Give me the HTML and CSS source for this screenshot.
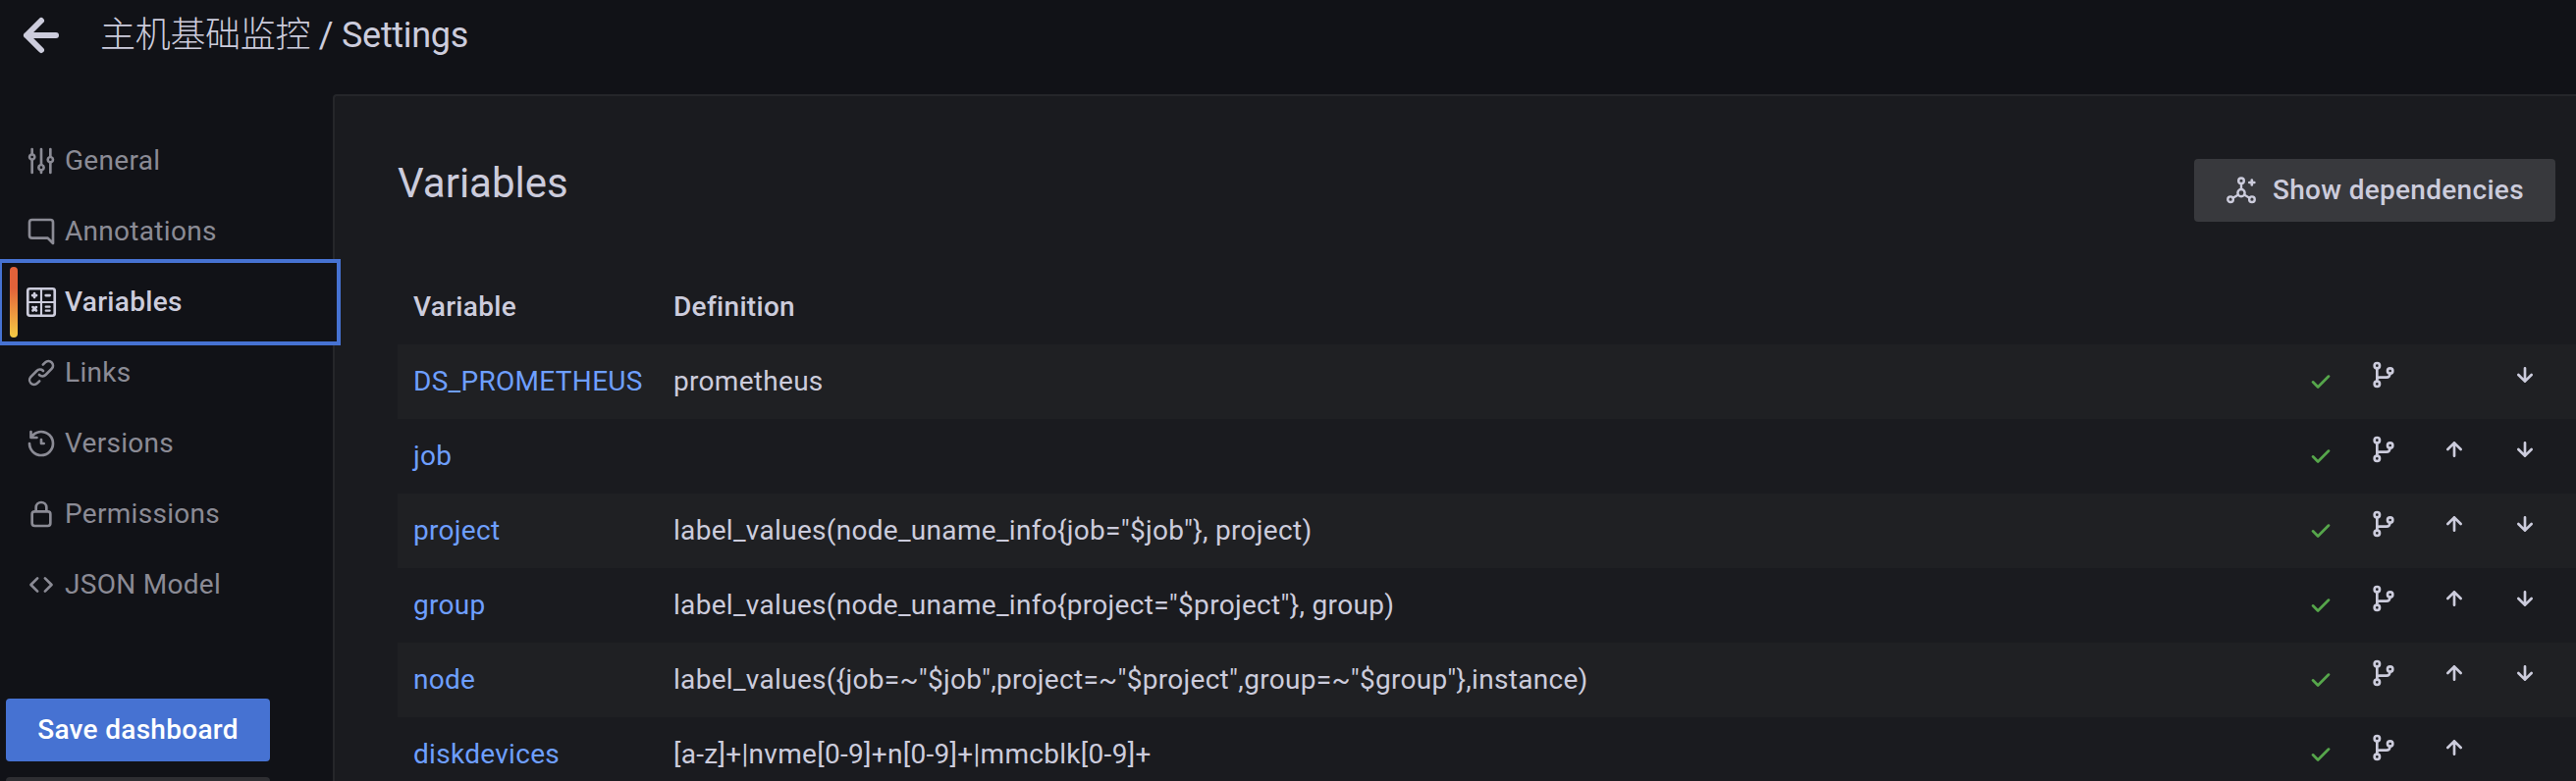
FILE: index.html
```html
<!DOCTYPE html>
<html lang="zh-CN">
<head>
	<meta charset="UTF-8">
	<title>主机基础监控 / Settings</title>
	<link rel="stylesheet" href="styles.css">
</head>
<body>
	<!-- icons -->
	<svg class="sprite">
		<symbol id="back" viewBox="0 0 24 24"><path class="line" d="M17 12H7M12 7l-5 5 5 5"/></symbol>
		<symbol id="sliders" viewBox="0 0 24 24"><path d="M20,8.18V3a1,1,0,0,0-2,0V8.18a3,3,0,0,0,0,5.64V21a1,1,0,0,0,2,0V13.82a3,3,0,0,0,0-5.64ZM19,12a1,1,0,1,1,1-1A1,1,0,0,1,19,12Zm-6,2.18V3a1,1,0,0,0-2,0V14.18a3,3,0,0,0,0,5.64V21a1,1,0,0,0,2,0V19.82a3,3,0,0,0,0-5.64ZM12,18a1,1,0,1,1,1-1A1,1,0,0,1,12,18ZM6,6.18V3A1,1,0,0,0,4,3V6.18a3,3,0,0,0,0,5.64V21a1,1,0,0,0,2,0V11.82A3,3,0,0,0,6,6.18ZM5,10A1,1,0,1,1,6,9,1,1,0,0,1,5,10Z"/></symbol>
		<symbol id="comment" viewBox="0 0 24 24"><path d="M19,2H5A3,3,0,0,0,2,5V15a3,3,0,0,0,3,3H16.59l3.7,3.71A1,1,0,0,0,21,22a.84.84,0,0,0,.38-.08A1,1,0,0,0,22,21V5A3,3,0,0,0,19,2Zm1,16.59-2.29-2.3A1,1,0,0,0,17,16H5a1,1,0,0,1-1-1V5A1,1,0,0,1,5,4H19a1,1,0,0,1,1,1Z"/></symbol>
		<symbol id="calculator" viewBox="0 0 24 24"><rect class="line" x="1.7" y="1.7" width="20.6" height="20.6" rx="1.6"/><path class="line thin" d="M12 2v20M2 12h20"/><path class="line" d="M5.3 6.8h3M6.8 5.3v3M15.5 6.8h3M5.6 15.8l2.6 2.6M8.2 15.8l-2.6 2.6"/><path class="line thin" d="M15.5 15.5h3M15.5 18.5h3"/></symbol>
		<symbol id="link" viewBox="0 0 24 24"><path d="M10,17.55,8.23,19.27a2.47,2.47,0,0,1-3.5-3.5l4.54-4.55a2.46,2.46,0,0,1,3.39-.09l.12.1a1,1,0,0,0,1.4-1.43A2.75,2.75,0,0,0,14,9.59a4.46,4.46,0,0,0-6.09.22L3.31,14.36a4.48,4.48,0,0,0,6.33,6.33L11.37,19A1,1,0,0,0,10,17.55ZM20.69,3.31a4.49,4.49,0,0,0-6.33,0L12.63,5A1,1,0,0,0,14,6.45l1.73-1.72a2.47,2.47,0,0,1,3.5,3.5l-4.54,4.55a2.46,2.46,0,0,1-3.39.09l-.12-.1a1,1,0,0,0-1.4,1.43,2.75,2.75,0,0,0,.23.21,4.47,4.47,0,0,0,6.09-.22l4.55-4.55A4.49,4.49,0,0,0,20.69,3.31Z"/></symbol>
		<symbol id="history" viewBox="0 0 24 24"><path d="M12,2A10,10,0,0,0,5.12,4.77V3a1,1,0,0,0-2,0V7.5a1,1,0,0,0,1,1H8.62a1,1,0,0,0,0-2H6.22A8,8,0,1,1,4,12a1,1,0,0,0-2,0A10,10,0,1,0,12,2Zm0,6a1,1,0,0,0-1,1v3a1,1,0,0,0,1,1h2a1,1,0,0,0,0-2H13V9A1,1,0,0,0,12,8Z"/></symbol>
		<symbol id="lock" viewBox="0 0 24 24"><path d="M17,9V7A5,5,0,0,0,7,7V9a3,3,0,0,0-3,3v7a3,3,0,0,0,3,3H17a3,3,0,0,0,3-3V12A3,3,0,0,0,17,9ZM9,7a3,3,0,0,1,6,0V9H9Zm9,12a1,1,0,0,1-1,1H7a1,1,0,0,1-1-1V12a1,1,0,0,1,1-1H17a1,1,0,0,1,1,1Z"/></symbol>
		<symbol id="code" viewBox="0 0 24 24"><path class="line" d="M9.1 7L4.1 12l5 5M14.9 7l5 5-5 5"/></symbol>
		<symbol id="graph" viewBox="0 0 24 24"><g class="line mid"><circle cx="12" cy="4.7" r="2.1"/><circle cx="12" cy="14" r="2.7"/><circle cx="3.8" cy="18.9" r="2.1"/><circle cx="20.2" cy="18.9" r="2.1"/><path d="M12 7v4M9.5 15.5l-3.8 2.3M14.5 15.5l3.8 2.3"/></g><path class="line" d="M18.2 6h3.8M20.1 4.1v3.8"/></symbol>
		<symbol id="check" viewBox="0 0 24 24"><path d="M18.71,7.21a1,1,0,0,0-1.42,0L9.84,14.67,6.71,11.53A1,1,0,1,0,5.29,13l3.84,3.84a1,1,0,0,0,1.42,0l8.16-8.16A1,1,0,0,0,18.71,7.21Z"/></symbol>
		<symbol id="branch" viewBox="0 0 24 24"><g class="line"><circle cx="7" cy="5" r="2"/><circle cx="7" cy="19" r="2"/><circle cx="17" cy="9" r="2"/><path d="M7 7v10M7 15.5c0-1 .8-1.5 2-1.5h5.2c1.6 0 2.5-.8 2.6-2.6"/></g></symbol>
		<symbol id="up" viewBox="0 0 24 24"><path class="line" d="M12 17V7M7 12l5-5 5 5"/></symbol>
		<symbol id="down" viewBox="0 0 24 24"><path class="line" d="M12 7v10M7 12l5 5 5-5"/></symbol>
	</svg>

	<div class="header">
		<svg class="back"><use href="#back"/></svg>
		<h1 class="title"><span class="name">主机基础监控</span> / Settings</h1>
	</div>

	<div class="main">
		<div class="side">
			<ul class="nav">
				<li><svg class="icon"><use href="#sliders"/></svg>General</li>
				<li><svg class="icon"><use href="#comment"/></svg>Annotations</li>
				<li class="active"><svg class="icon"><use href="#calculator"/></svg>Variables</li>
				<li><svg class="icon"><use href="#link"/></svg>Links</li>
				<li><svg class="icon"><use href="#history"/></svg>Versions</li>
				<li><svg class="icon"><use href="#lock"/></svg>Permissions</li>
				<li><svg class="icon"><use href="#code"/></svg>JSON Model</li>
			</ul>
			<button class="btn save">Save dashboard</button>
			<button class="btn save-as"></button>
		</div>

		<div class="panel">
			<div class="panel-top">
				<h2>Variables</h2>
				<button class="btn deps"><svg class="icon"><use href="#graph"/></svg>Show dependencies</button>
			</div>

			<div class="table">
				<div class="row head">
					<span>Variable</span>
					<span>Definition</span>
				</div>
				<div class="row">
					<a>DS_PROMETHEUS</a>
					<span>prometheus</span>
					<svg class="icon ok"><use href="#check"/></svg>
					<svg class="icon act"><use href="#branch"/></svg>
					<i></i>
					<svg class="icon act"><use href="#down"/></svg>
				</div>
				<div class="row">
					<a>job</a>
					<span></span>
					<svg class="icon ok"><use href="#check"/></svg>
					<svg class="icon act"><use href="#branch"/></svg>
					<svg class="icon act"><use href="#up"/></svg>
					<svg class="icon act"><use href="#down"/></svg>
				</div>
				<div class="row">
					<a>project</a>
					<span>label_values(node_uname_info{job="$job"}, project)</span>
					<svg class="icon ok"><use href="#check"/></svg>
					<svg class="icon act"><use href="#branch"/></svg>
					<svg class="icon act"><use href="#up"/></svg>
					<svg class="icon act"><use href="#down"/></svg>
				</div>
				<div class="row">
					<a>group</a>
					<span>label_values(node_uname_info{project="$project"}, group)</span>
					<svg class="icon ok"><use href="#check"/></svg>
					<svg class="icon act"><use href="#branch"/></svg>
					<svg class="icon act"><use href="#up"/></svg>
					<svg class="icon act"><use href="#down"/></svg>
				</div>
				<div class="row">
					<a>node</a>
					<span>label_values({job=~"$job",project=~"$project",group=~"$group"},instance)</span>
					<svg class="icon ok"><use href="#check"/></svg>
					<svg class="icon act"><use href="#branch"/></svg>
					<svg class="icon act"><use href="#up"/></svg>
					<svg class="icon act"><use href="#down"/></svg>
				</div>
				<div class="row">
					<a>diskdevices</a>
					<span>[a-z]+|nvme[0-9]+n[0-9]+|mmcblk[0-9]+</span>
					<svg class="icon ok"><use href="#check"/></svg>
					<svg class="icon act"><use href="#branch"/></svg>
					<svg class="icon act"><use href="#up"/></svg>
				</div>
			</div>
		</div>
	</div>
</body>
</html>
```
FILE: styles.css
```css
* {
	box-sizing: border-box;
	margin: 0;
	padding: 0;
}

body {
	height: 796px;
	overflow: hidden;
	background-color: #111217;
	color: #ccccdc;
	font-family: Roboto, "Noto Sans CJK SC", sans-serif;
	font-size: 28px;
	line-height: 44px;
	letter-spacing: 0.3px;
}

ul {
	list-style: none;
}

.sprite {
	display: none;
}

svg {
	fill: currentColor;
}

.line {
	fill: none;
	stroke: currentColor;
	stroke-width: 2;
	stroke-linecap: round;
	stroke-linejoin: round;
}

.thin {
	stroke-width: 1.6;
}

.mid {
	stroke-width: 1.8;
}

.icon {
	flex: none;
	width: 32px;
	height: 32px;
}

.header {
	display: flex;
	align-items: center;
	height: 72px;
	padding-left: 6px;
}

.back {
	width: 72px;
	height: 72px;
}

.title {
	margin-left: 24px;
	font-size: 36px;
	font-weight: 400;
	letter-spacing: -0.3px;
}

.title .name {
	font-weight: 300;
}

.main {
	display: flex;
	height: 724px;
	padding-top: 24px;
	overflow: hidden;
}

/* left menu */
.side {
	flex: none;
	width: 339px;
	padding: 20px 0 0 6px;
}

.nav {
	padding-top: 12px;
}

.nav li {
	display: flex;
	align-items: center;
	gap: 8px;
	height: 72px;
	padding-left: 20px;
	color: #8b8b95;
}

.nav .active {
	position: relative;
	background-color: #111217;
	box-shadow: 0 0 0 4px #111217, 0 0 0 8px #4672d2;
	color: #ccccdc;
	font-weight: 500;
}

.nav .active::before {
	content: "";
	position: absolute;
	left: 4px;
	top: 0;
	width: 8px;
	height: 72px;
	border-radius: 4px;
	background-image: linear-gradient(#e2623a 30%, #f5c944 99%);
}

.btn {
	display: flex;
	align-items: center;
	height: 64px;
	border: none;
	border-radius: 4px;
	color: #ccccdc;
	font: inherit;
	font-weight: 500;
	letter-spacing: 0.3px;
}

.save {
	justify-content: center;
	width: 269px;
	margin-top: 80px;
	background-color: #4672d2;
	color: #fff;
}

.save-as {
	width: 269px;
	height: 4px;
	margin-top: 16px;
	border-radius: 4px 4px 0 0;
	background-color: #2e2e32;
}

/* content */
.panel {
	flex: 1;
	min-width: 0;
	height: 700px;
	padding-left: 64px;
	border: 2px solid #25262a;
	border-width: 2px 0 0 2px;
	border-radius: 4px 0 0 0;
	background-color: #1a1b1f;
	overflow: hidden;
}

.panel-top {
	display: flex;
	justify-content: space-between;
	height: 177px;
	padding: 64px 21px 0 0;
}

.panel-top h2 {
	margin-top: 3px;
	font-size: 42px;
	font-weight: 400;
	letter-spacing: 0;
}

.deps {
	gap: 16px;
	width: 368px;
	padding-left: 32px;
	background-color: #38393d;
}

.row {
	display: grid;
	grid-template-columns: 265px 1662px 64px 72px 72px 1fr;
	align-items: center;
	height: 76px;
	padding-left: 16px;
}

.row:nth-child(even) {
	background-color: #1f2023;
}

.row.head {
	font-weight: 500;
}

.row a {
	color: #6e9fff;
}

.ok {
	color: #56a64b;
}

.act {
	margin-bottom: 14px;
}

.row:last-child {
	height: 65px;
	align-items: start;
	padding-top: 16px;
}

.row:last-child .ok {
	margin-top: 6px;
}

.row:last-child .act {
	margin-top: -1px;
}
```
